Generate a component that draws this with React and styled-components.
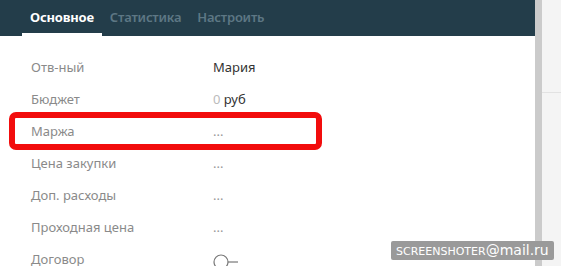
import React from 'react'
import styled, { createGlobalStyle } from 'styled-components'

const Global = createGlobalStyle`
  html, body { margin:0; padding:0; background:#fff; }
  body { font-family: "Noto Sans", "Open Sans", sans-serif; overflow:hidden; }
`

const Page = styled.div`
display:flex;
width:561px;
height:266px;
`

const Panel = styled.div`
position:relative;
width:535px;
display:flex;
flex-direction:column;
background:#fff;
`

const Scroll = styled.div`
width:7px;
background:#cbcbcb;
`

const Side = styled.div`
flex:1;
background:#f4f4f4;
display:flex;
flex-direction:column;
div{
  height:92px;
  border-bottom:1px solid #e2e2e2;
}
`

const TabBar = styled.div`
height:36px;
background:#233d4a;
display:flex;
padding-left:22px;
gap:0;
`

const Tab = styled.div`
font-size:13px;
font-weight:${p => p.active ? 700 : 600};
color:${p => p.active ? '#fff' : '#5d7784'};
padding:0 8px;
line-height:34px;
border-bottom:3px solid ${p => p.active ? '#fff' : 'transparent'};
height:33px;
letter-spacing:-0.2px;
`

const Rows = styled.div`
display:flex;
flex-direction:column;
padding-top:15px;
`

const Row = styled.div`
display:grid;
grid-template-columns:182px 1fr;
padding-left:31px;
height:32px;
align-items:center;
font-size:13px;
`

const Label = styled.span`
color:#8a8a8a;
`

const Value = styled.span`
color:${p => p.muted ? '#999' : '#333'};
span{ color:#bbb; }
`

const Toggle = styled.span`
display:inline-flex;
align-items:center;
margin-top:6px;
`

const Mark = styled.div`
position:absolute;
left:9px;
top:112px;
width:301px;
height:26px;
border:6px solid #f20d0d;
border-radius:7px;
`

const Stamp = styled.div`
position:absolute;
left:391px;
top:241px;
padding:0 5px;
height:19px;
background:#9a9a9a;
color:#fff;
font-family:"DejaVu Sans", sans-serif;
font-size:11px;
line-height:19px;
border-radius:2px;
b{ font-weight:400; font-size:14px; }
`

const rows = [
  ['Отв-ный', 'Мария'],
  ['Бюджет', 'budget'],
  ['Маржа', '...'],
  ['Цена закупки', '...'],
  ['Доп. расходы', '...'],
  ['Проходная цена', '...'],
  ['Договор', 'toggle'],
]

export default function App() {
  return (
    <>
      <Global />
      <Page>
        <Panel>
          <TabBar>
            <Tab active>Основное</Tab>
            <Tab>Статистика</Tab>
            <Tab>Настроить</Tab>
          </TabBar>
          <Rows>
            {rows.map(([l, v]) => (
              <Row key={l}>
                <Label>{l}</Label>
                {v === 'budget' ? (
                  <Value><span>0</span> руб</Value>
                ) : v === 'toggle' ? (
                  <Toggle>
                    <svg width="26" height="16" viewBox="0 0 26 16">
                      <circle cx="8" cy="8" r="7" fill="none" stroke="#777" strokeWidth="1.2" />
                      <line x1="15" y1="8" x2="25" y2="8" stroke="#777" strokeWidth="1.2" />
                    </svg>
                  </Toggle>
                ) : (
                  <Value muted={v === '...'}>{v}</Value>
                )}
              </Row>
            ))}
          </Rows>
          <Mark />
          <Stamp>SCREENSHOTER<b>@mail.ru</b></Stamp>
        </Panel>
        <Scroll />
        <Side><div /></Side>
      </Page>
    </>
  )
}
